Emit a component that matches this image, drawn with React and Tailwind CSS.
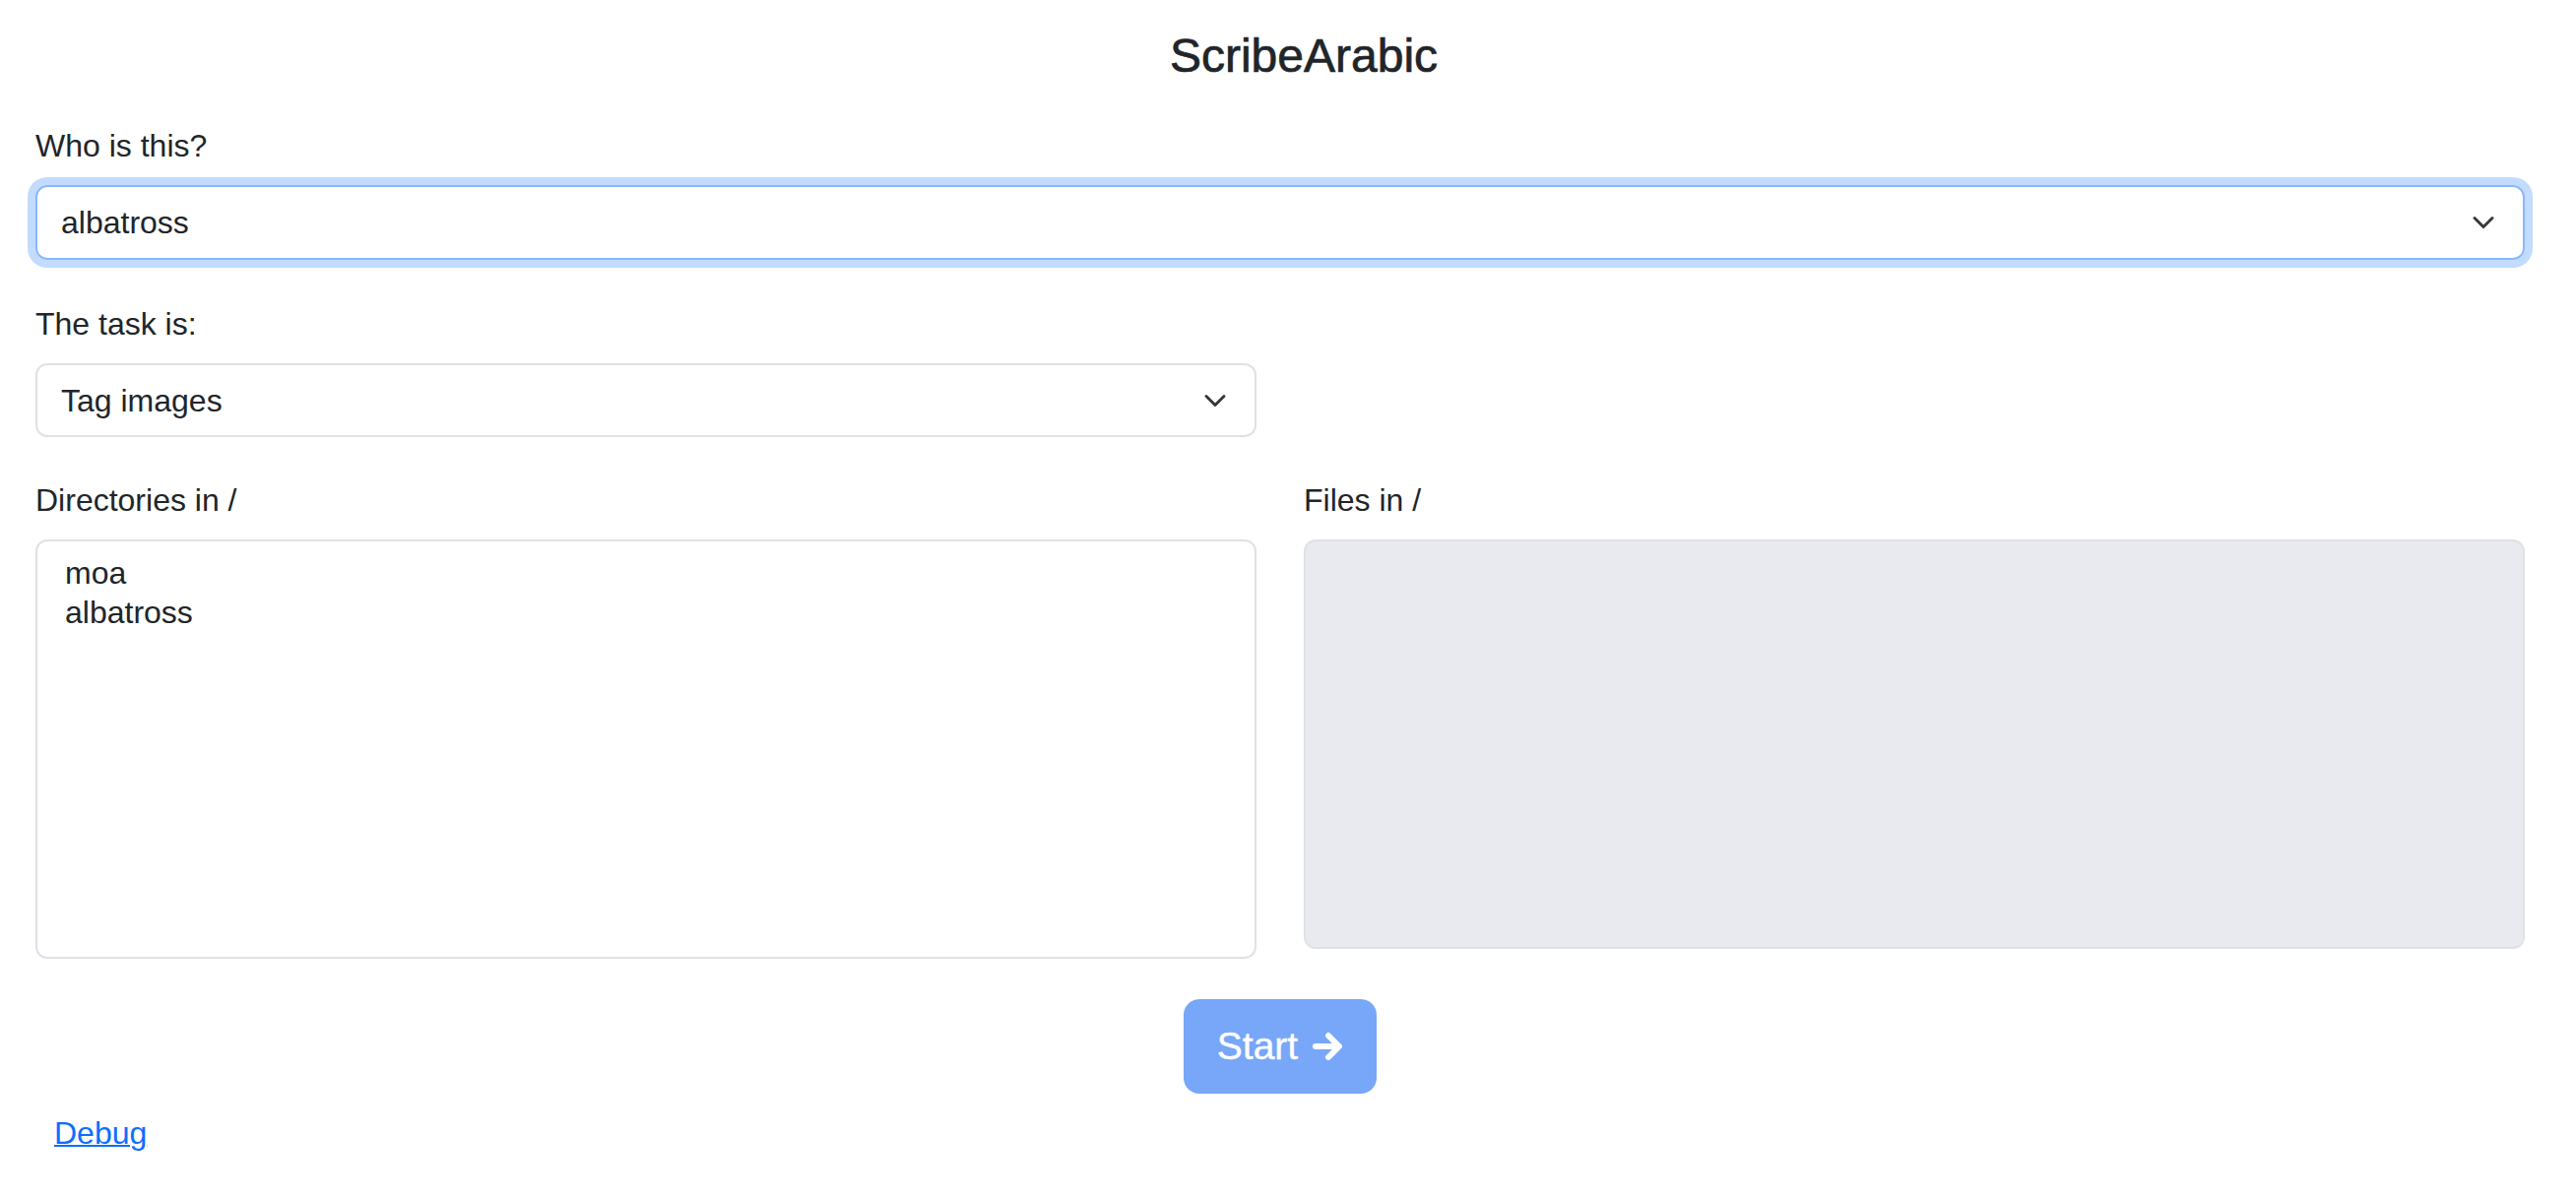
import React from 'react';

const Chevron = () => (
    <svg className="w-[24px] h-[24px] shrink-0" viewBox="0 0 16 16" fill="none">
        <path d="m2 5 6 6 6-6" stroke="#343a40" strokeWidth="2" strokeLinecap="round" strokeLinejoin="round" />
    </svg>
);

const ArrowRight = () => (
    <svg className="w-[32px] h-[32px] shrink-0" viewBox="0 0 32 32" fill="none">
        <path d="M4 16h22" stroke="white" strokeWidth="6" strokeLinecap="round" />
        <path d="M17 5l11 11-11 11" stroke="white" strokeWidth="6" strokeLinecap="round" strokeLinejoin="round" />
    </svg>
);

const App = () => {
    const directories = ['moa', 'albatross'];

    return (
        <div className="min-h-screen bg-white text-[#212529] font-['Liberation_Sans',Arial,sans-serif]">
            {/* Title */}
            <h1 className="pt-[28px] pl-[32px] text-center text-[48px] leading-[58px] font-medium [-webkit-text-stroke:0.7px_#212529]">
                ScribeArabic
            </h1>

            <div className="pl-[36px] pr-[52px]">
                {/* Who is this */}
                <label className="block mt-[38px] mb-[16px] text-[32px] leading-[48px]">Who is this?</label>
                <div className="flex items-center justify-between h-[76px] pl-[24px] pr-[28px] border-2 border-[#86b7fe] rounded-[12px] shadow-[0_0_0_8px_rgba(13,110,253,0.25)] text-[32px] leading-[48px]">
                    <span>albatross</span>
                    <Chevron />
                </div>

                {/* Task */}
                <label className="block mt-[41px] mb-[16px] text-[32px] leading-[48px]">The task is:</label>
                <div className="grid grid-cols-2 gap-x-[48px]">
                    <div className="flex items-center justify-between h-[75px] pl-[24px] pr-[28px] border-2 border-[#dee2e6] rounded-[12px] text-[32px] leading-[48px]">
                        <span>Tag images</span>
                        <Chevron />
                    </div>
                </div>

                {/* Directories / Files */}
                <div className="grid grid-cols-2 gap-x-[48px] items-start mt-[40px]">
                    <div>
                        <label className="block mb-[16px] text-[32px] leading-[48px]">Directories in /</label>
                        <div className="h-[426px] border-2 border-[#dee2e6] rounded-[12px] px-[24px] py-[12px] text-[32px] leading-[40px]">
                            {directories.map((dir) => (
                                <div key={dir} className="px-[4px]">{dir}</div>
                            ))}
                        </div>
                    </div>
                    <div>
                        <label className="block mb-[16px] text-[32px] leading-[48px]">Files in /</label>
                        <div className="h-[416px] border-2 border-[#dee2e6] rounded-[12px] bg-[#e9eaef]" />
                    </div>
                </div>

                {/* Start */}
                <div className="flex justify-center mt-[41px]">
                    <button
                        disabled
                        className="flex items-center gap-[14px] h-[96px] px-[34px] rounded-[16px] bg-[#78a6f8] text-white text-[39px] leading-[56px] [-webkit-text-stroke:0.4px_white]"
                    >
                        <span>Start</span>
                        <ArrowRight />
                    </button>
                </div>

                {/* Debug */}
                <div className="mt-[16px] pl-[19px]">
                    <a href="#" className="text-[32px] leading-[48px] text-[#0d6efd] underline decoration-2">
                        Debug
                    </a>
                </div>
            </div>
        </div>
    );
};

export default App;
